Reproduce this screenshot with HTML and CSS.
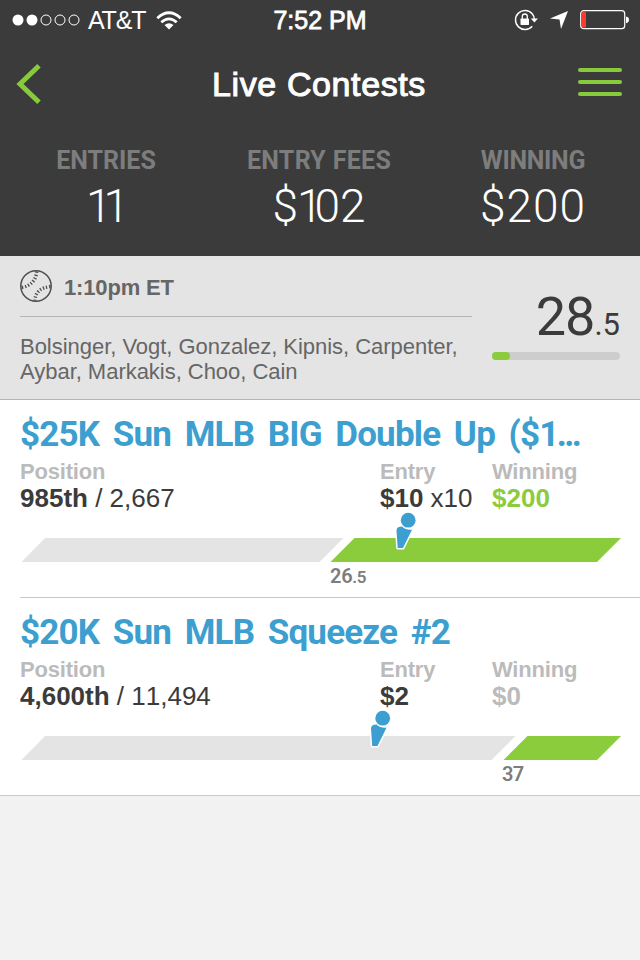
FILE: index.html
```html
<!DOCTYPE html>
<html lang="en">
<head>
<meta charset="utf-8">
<title>Live Contests</title>
<link rel="stylesheet" href="styles.css">
</head>
<body>
<header class="header">
  <div class="status">
    <div class="status-left">
      <svg class="signal" width="68" height="14" viewBox="0 0 68 14" fill="none" stroke="#fff"><circle cx="6" cy="7" r="5.5" fill="#fff" stroke="none"/><circle cx="20" cy="7" r="5.5" fill="#fff" stroke="none"/><circle cx="34" cy="7" r="5"/><circle cx="48" cy="7" r="5"/><circle cx="62" cy="7" r="5"/></svg>
      <span class="carrier">AT&amp;T</span>
      <svg class="wifi" width="26" height="19" viewBox="0 0 26 19" fill="none" stroke="#fff" stroke-width="2.8"><path d="M1.3 7.2Q13-3.600 24.700 7.200M5.300 11.300Q13 4.500 20.700 11.300"/><path d="M8.500 14Q13 10.400 17.500 14L13 18.500Z" fill="#fff" stroke="none"/></svg>
    </div>
    <span class="clock">7:52 PM</span>
    <div class="status-right">
      <svg width="24" height="22" viewBox="0 0 24 22"><path d="M18.200 4.800A9.500 9.500 0 1 0 18.200 17.200M18.200 4.800A9.500 9.500 0 0 1 20.300 10" fill="none" stroke="#fff" stroke-width="1.400"/><path d="M16.800 9.500H24L20.400 13.500Z" fill="#fff"/><rect x="6.500" y="9.500" width="8.500" height="6.500" rx=".7" fill="#fff"/><path d="M8.300 10V7.500a2.500 2.500 0 0 1 5 0V10" fill="none" stroke="#fff" stroke-width="1.300"/></svg>
      <svg class="arrow" width="18" height="18" viewBox="0 0 18 18"><path d="M18 0L11 18L9.500 8.500L0 7.500Z" fill="#fff"/></svg>
      <svg class="battery" width="50" height="20" viewBox="0 0 50 20"><rect x=".7" y=".7" width="44" height="18" rx="3" fill="none" stroke="#fff" stroke-width="1.200"/><rect x="2" y="2" width="4" height="15.500" rx="1" fill="#ff3b30"/><path d="M46 6.500Q49 7 49 9.800Q49 12.500 46 13.200Z" fill="#fff"/></svg>
    </div>
  </div>
  <nav class="nav">
    <svg class="back" width="26" height="40" viewBox="0 0 26 40" fill="none" stroke="#87ca3b" stroke-width="5"><path d="M23 1.800L4 20L23 38.200"/></svg>
    <h1 class="nav-title">Live Contests</h1>
    <div class="menu"><i></i><i></i><i></i></div>
  </nav>
  <div class="stats">
    <div class="stat"><span class="stat-label">ENTRIES</span><span class="stat-value entries"><span class="one">1</span>1</span></div>
    <div class="stat"><span class="stat-label fees">ENTRY FEES</span><span class="stat-value"><span class="dollar">$</span><span class="one">1</span>02</span></div>
    <div class="stat"><span class="stat-label win">WINNING</span><span class="stat-value wide">$200</span></div>
  </div>
</header>
<section class="lineup">
  <div class="lineup-info">
    <div class="game">
      <svg width="32" height="32" viewBox="0 0 32 32" fill="none" stroke="#4d4d4d"><circle cx="16" cy="16" r="15.200" stroke-width="1.500"/><path d="M16.700 1.500C16 9 12 16 1.500 17.500" stroke-width="3.400" stroke-dasharray="1.300 1.900"/><path d="M30.500 16.500C20 18 15.500 22 14.800 30.500" stroke-width="3.400" stroke-dasharray="1.300 1.900"/></svg>
      <span class="game-time">1:10pm ET</span>
    </div>
    <p class="players">Bolsinger, Vogt, Gonzalez, Kipnis, Carpenter,<br>Aybar, Markakis, Choo, Cain</p>
  </div>
  <div class="score">
    <div class="points"><span class="whole">28</span><span class="decimal">.5</span></div>
    <div class="meter"><div class="meter-fill"></div></div>
  </div>
</section>
<main>
  <article class="contest">
    <h2 class="title">$25K Sun MLB BIG Double Up ($<span class="dots">1...</span></h2>
    <div class="facts">
      <div><div class="label">Position</div><div class="value"><b>985th</b> / 2,667</div></div>
      <div><div class="label">Entry</div><div class="value"><b>$10</b> x10</div></div>
      <div><div class="label">Winning</div><div class="value won"><b>$200</b></div></div>
    </div>
    <div class="track">
      <svg width="600" height="50" viewBox="0 0 600 50"><path d="M25 26H323.500L299.500 50H1.500Z" fill="#e4e4e4"/><path d="M334.500 26H601L577 50H310.500Z" fill="#8bcc3d"/><g transform="translate(374 0)"><path d="M2.500 18.500Q2.500 14.500 8 14.500Q12 18.300 18 17.700L9 36H3.700Z" fill="#3c9fd0" stroke="#fff" stroke-width="3" stroke-linejoin="round" paint-order="stroke"/><circle cx="14.200" cy="8.200" r="7.400" fill="#3c9fd0"/></g></svg>
    </div>
    <div class="mark m1">26<small>.5</small></div>
  </article>
  <article class="contest">
    <h2 class="title">$20K Sun MLB Squeeze #2</h2>
    <div class="facts">
      <div><div class="label">Position</div><div class="value"><b>4,600th</b> / 11,494</div></div>
      <div><div class="label">Entry</div><div class="value"><b>$2</b></div></div>
      <div><div class="label">Winning</div><div class="value none"><b>$0</b></div></div>
    </div>
    <div class="track">
      <svg width="600" height="50" viewBox="0 0 600 50"><path d="M25 26H495.500L471.500 50H1.500Z" fill="#e4e4e4"/><path d="M507.500 26H601L577 50H483.500Z" fill="#8bcc3d"/><g transform="translate(348.500 0)"><path d="M2.500 18.500Q2.500 14.500 8 14.500Q12 18.300 18 17.700L9 36H3.700Z" fill="#3c9fd0" stroke="#fff" stroke-width="3" stroke-linejoin="round" paint-order="stroke"/><circle cx="14.200" cy="8.200" r="7.400" fill="#3c9fd0"/></g></svg>
    </div>
    <div class="mark m2">37</div>
  </article>
</main>
</body>
</html>
```
FILE: styles.css
```css
* { box-sizing: border-box; }
body { margin: 0; width: 640px; height: 960px; background: #f2f2f2; font-family: "Liberation Sans", Arial, sans-serif; color: #3b3b3b; overflow: hidden; }
svg { display: block; flex: none; overflow: visible; }
.header { height: 256px; background: #3b3b3b; color: #fff; }
.status { height: 40px; display: grid; grid-template-columns: 1fr auto 1fr; align-items: center; font-size: 25px; line-height: 40px; }
.status-left { display: flex; align-items: center; padding-left: 12px; }
.carrier { margin-left: 8px; letter-spacing: -1.2px; }
.wifi { margin-left: 11px; }
.clock { -webkit-text-stroke: .8px #fff; }
.status-right { display: flex; align-items: center; justify-content: flex-end; padding-right: 10px; }
.arrow { margin-left: 12px; }
.battery { margin-left: 12px; }
.nav { height: 88px; display: grid; grid-template-columns: 1fr auto 1fr; align-items: center; padding: 0 18px 0 16px; }
.nav-title { margin: 0; font-size: 34px; font-weight: 400; -webkit-text-stroke: 1px #fff; line-height: 40px; letter-spacing: .6px; }
.menu { justify-self: end; width: 44px; display: flex; flex-direction: column; gap: 8px; margin-bottom: 4px; }
.menu i { height: 4px; border-radius: 2px; background: #87ca3b; }
.stats { display: grid; grid-template-columns: 212px 214px 214px; font-family: Roboto, sans-serif; text-align: center; padding-top: 19px; }
.stat { display: flex; flex-direction: column; align-items: center; }
.stat-label { font-size: 25px; line-height: 28px; font-weight: 700; color: #7d7d7d; }
.fees { letter-spacing: .3px; }
.win { letter-spacing: -.3px; }
.stat-value { font-size: 46px; line-height: 62px; font-weight: 300; }
.one { letter-spacing: -8px; }
.entries { padding-left: 3px; }
.dollar { letter-spacing: -1px; }
.wide { letter-spacing: 1px; }
.lineup { height: 144px; display: flex; justify-content: space-between; background: #e4e4e4; border-bottom: 1px solid #b4b4b4; padding: 0 20px; color: #666; }
.lineup-info { width: 452px; }
.game { height: 61px; display: flex; align-items: center; gap: 12px; border-bottom: 1px solid #b4b4b4; }
.game-time { font-size: 22px; line-height: 24px; font-weight: 700; padding-top: 3px; letter-spacing: -.15px; }
.players { margin: 17px 0 0; font-size: 22px; line-height: 25px; letter-spacing: -.03px; white-space: nowrap; }
.score { width: 128px; padding-top: 29px; }
.points { height: 64px; display: flex; justify-content: flex-end; align-items: baseline; font-family: Roboto, sans-serif; color: #3b3b3b; line-height: 64px; }
.whole { font-size: 54px; letter-spacing: -1px; }
.decimal { font-size: 31px; }
.meter { margin-top: 3px; height: 8px; border-radius: 4px; background: #cdcdcd; }
.meter-fill { width: 18px; height: 8px; border-radius: 4px; background: #8bcc3d; }
.contest { height: 198px; background: #fff; padding: 14px 20px 0; }
.contest:first-child { background: linear-gradient(#c8c8c8, #c8c8c8) 20px 100% / 100% 1px no-repeat #fff; }
.contest:last-child { border-bottom: 1px solid #c8c8c8; }
.title { margin: 0; height: 45px; line-height: 42px; font-family: Roboto, sans-serif; font-size: 35px; font-weight: 700; color: #3c9fd0; white-space: nowrap; letter-spacing: -.8px; word-spacing: 5.6px; }
.dots { letter-spacing: -2.6px; }
.facts { display: grid; grid-template-columns: 360px 112px 1fr; }
.label { font-size: 22px; line-height: 26px; font-weight: 700; color: #bbb; letter-spacing: -.2px; }
.value { font-size: 26px; line-height: 27px; white-space: nowrap; font-kerning: none; }
.won { color: #8bcc3d; }
.none { color: #bbb; }
.mark { font-family: Roboto, sans-serif; font-weight: 600; font-size: 20px; line-height: 28px; color: #7d7d7d; }
.mark small { font-size: 17px; }
.m1 { padding-left: 310px; letter-spacing: -.3px; }
.m2 { padding-left: 482px; letter-spacing: -.8px; }
```
